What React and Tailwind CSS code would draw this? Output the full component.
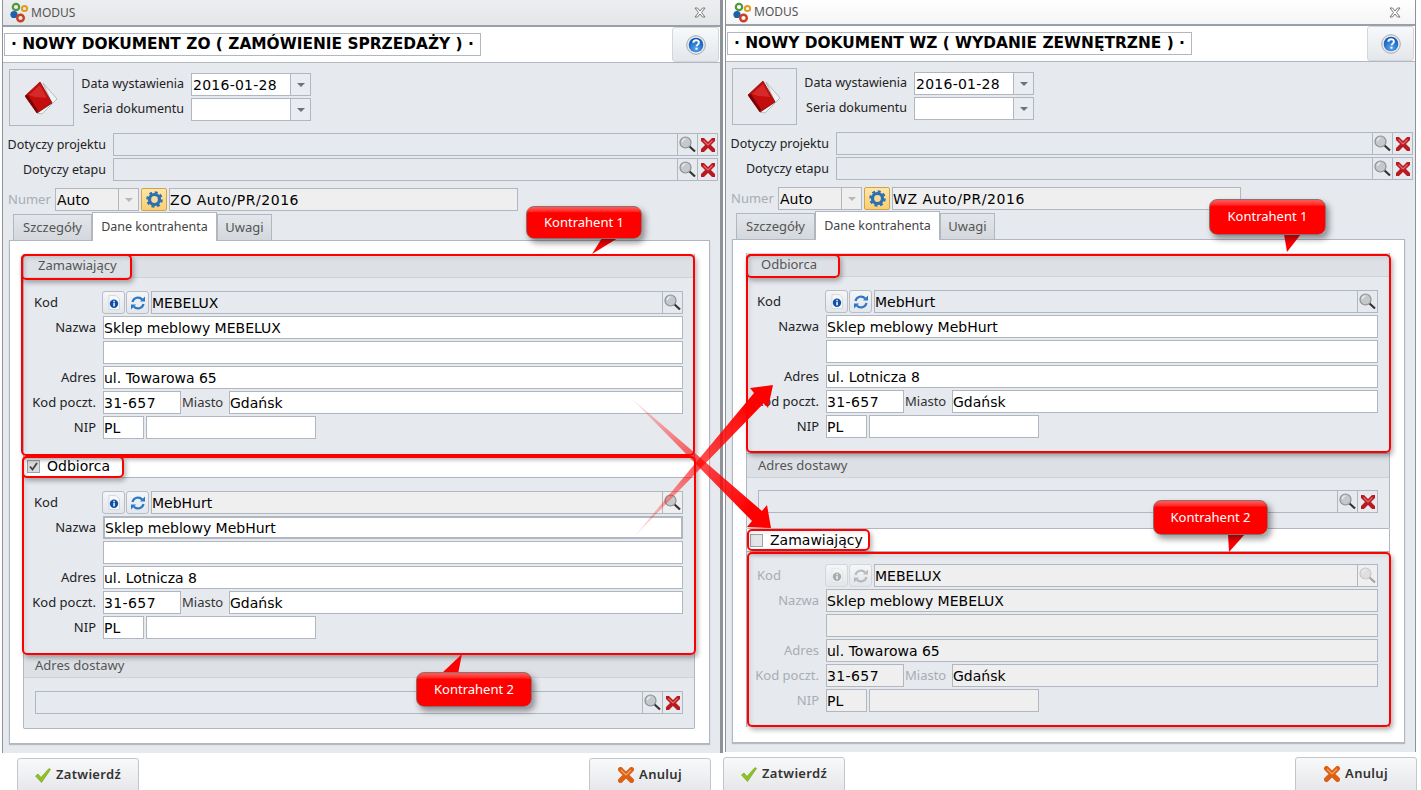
import React from 'react';

const Logo = () => (
  <svg width="19" height="21" viewBox="0 0 19 21" className="shrink-0">
    <circle cx="6" cy="5" r="3.2" fill="none" stroke="#4f9a3c" strokeWidth="2.2" />
    <circle cx="14.5" cy="6.5" r="2.6" fill="none" stroke="#e39a1f" strokeWidth="2" />
    <circle cx="4" cy="12.5" r="3.6" fill="#1f5fb0" />
    <circle cx="10.5" cy="16" r="3.3" fill="none" stroke="#c8401f" strokeWidth="2.4" />
  </svg>
);

const CloseIcon = () => (
  <svg width="12" height="11" viewBox="0 0 12 11">
    <path d="M1 1h2.5L6 4l2.500-3H11L7.500 5.500 11 10H8.500L6 7l-2.500 3H1l3.500-4.500z" fill="#fff" stroke="#777" strokeWidth="1" />
  </svg>
);

const HelpIcon = () => (
  <svg width="20" height="20" viewBox="0 0 20 20">
    <defs>
      <radialGradient id="helpBall" cx="50%" cy="75%" r="70%">
        <stop offset="0" stopColor="#5aa6ee" />
        <stop offset="1" stopColor="#0b55b5" />
      </radialGradient>
    </defs>
    <circle cx="10" cy="10" r="9.300" fill="#e8ecef" stroke="#a3a9ae" />
    <circle cx="10" cy="10" r="7.300" fill="url(#helpBall)" />
    <path d="M7.300 7.800c0-3.400 5.600-3.400 5.600-.2 0 2-2.300 2-2.300 3.700" fill="none" stroke="#fff" strokeWidth="1.900" />
    <rect x="9.500" y="12.700" width="2" height="2" fill="#fff" />
  </svg>
);

const BookIcon = () => (
  <svg width="33" height="34" viewBox="0 0 33 34">
    <polygon points="18,2 32,18 17,33 12,32 27,22" fill="#f1f3f4" stroke="#a9adb0" strokeWidth="0.800" />
    <polygon points="0,15 15,1 27,22 12,32" fill="#c40d0d" stroke="#8c0606" strokeWidth="0.800" />
    <polygon points="4,14 15,4 22,17 10,16" fill="#e23c3c" opacity="0.600" />
    <polygon points="0,15 12,32 13,29.500 3,14" fill="#7a0404" />
  </svg>
);

const SearchIcon = ({ faded }) => (
  <svg width="17" height="17" viewBox="0 0 17 17" className={faded ? 'opacity-40' : ''}>
    <line x1="9.500" y1="9.500" x2="16" y2="15.500" stroke="#333" strokeWidth="2.200" />
    <circle cx="6.500" cy="6.500" r="5.500" fill="#c6c9cb" stroke="#8e9193" strokeWidth="1.200" />
    <path d="M3.500 6a3 3 0 0 1 3-3" fill="none" stroke="#f1f2f3" strokeWidth="1.200" />
  </svg>
);

const RedX = () => (
  <svg width="14" height="14" viewBox="0 0 14 14">
    <path d="M1.500 1.500 12.500 12.500M12.500 1.500 1.500 12.500" stroke="#b81a20" strokeWidth="4.200" strokeLinecap="round" />
    <path d="M2.500 2.500 7 7M11.500 2.500 7 7" stroke="#e8686c" strokeWidth="1.100" />
  </svg>
);

const OrangeX = () => (
  <svg width="16" height="16" viewBox="0 0 16 16">
    <path d="M2.500 2.500 13.500 13.500M13.500 2.500 2.500 13.500" stroke="#dd5f14" strokeWidth="5" strokeLinecap="round" />
    <path d="M3 3 8 8M13 3 8 8" stroke="#f5a467" strokeWidth="1.300" />
  </svg>
);

const CheckIcon = () => (
  <svg width="16" height="15" viewBox="0 0 16 15">
    <path d="M0.500 8 3 6l3 3.500L14 0.500l1.500 1L6.500 14.500z" fill="#8fc31f" stroke="#6f9c1a" strokeWidth="0.600" />
  </svg>
);

const GearIcon = () => (
  <svg width="17" height="17" viewBox="0 0 17 17">
    <circle cx="8.500" cy="8.500" r="5" fill="none" stroke="#2b6fb4" strokeWidth="3.200" />
    <circle cx="8.500" cy="8.500" r="7.200" fill="none" stroke="#2b6fb4" strokeWidth="2.200" strokeDasharray="3 2.650" />
    <circle cx="8.500" cy="8.500" r="2.400" fill="#f7dc9b" />
  </svg>
);

const InfoIcon = ({ faded }) => (
  <svg width="12" height="15" viewBox="0 0 12 15" className={faded ? 'opacity-40 grayscale' : ''}>
    <path d="M1 0.500h7l3.500 3.500v10.500H1z" fill="#f7f8fa" stroke="#c9ced3" strokeWidth="0.700" />
    <circle cx="6" cy="8.800" r="4.200" fill="#0e4fa8" />
    <rect x="5.300" y="5.800" width="1.500" height="1.400" fill="#fff" />
    <rect x="5.300" y="7.900" width="1.500" height="3.500" fill="#fff" />
  </svg>
);

const RefreshIcon = ({ faded }) => (
  <svg width="16" height="16" viewBox="0 0 16 16" className={faded ? 'opacity-40 grayscale' : ''}>
    <path d="M2.500 7a5.600 5.600 0 0 1 9.700-2.500" fill="none" stroke="#2c78c4" strokeWidth="2.200" />
    <path d="M13.500 9a5.600 5.600 0 0 1-9.700 2.500" fill="none" stroke="#2c78c4" strokeWidth="2.200" />
    <path d="M10 6.500h5V1.500z" fill="#2c78c4" />
    <path d="M6 9.500H1v5z" fill="#2c78c4" />
  </svg>
);

const Caret = ({ faded }) => (
  <span className={`w-0 h-0 border-x-[4px] border-x-transparent border-t-[4px] ${faded ? 'border-t-[#b5b9be]' : 'border-t-[#6d7278]'}`} />
);

const Field = ({ children, className = '' }) => (
  <div className={`h-[23px] flex items-center border border-[#b0b7c0] overflow-hidden whitespace-nowrap font-['DejaVu_Sans'] text-[14px] leading-none text-black ${className}`}>
    {children}
  </div>
);

const ComboField = ({ value, faded }) => (
  <Field className="w-[120px] bg-white tracking-[0.25px]">
    <span className="flex-1 pl-[1px]">{value}</span>
    <span className="w-[20px] self-stretch flex items-center justify-center border-l border-[#b0b7c0] bg-[#e9ecf0]">
      <Caret faded={faded} />
    </span>
  </Field>
);

const IconBtn = ({ children }) => (
  <div className="w-[20px] h-[23px] shrink-0 flex items-center justify-center border border-l-0 border-[#b0b7c0]">{children}</div>
);

const LookupRow = ({ label }) => (
  <div className="flex h-[23px] pl-[3px] pr-[2px] mt-[2px] first:mt-0">
    <div className="w-[100px] mr-[7px] text-right text-[12.5px] whitespace-nowrap text-[#222] leading-[23px]">{label}</div>
    <Field className="flex-1" />
    <IconBtn><SearchIcon /></IconBtn>
    <IconBtn><RedX /></IconBtn>
  </div>
);

const Tab = ({ children, active, className = '' }) => (
  <div className={active
    ? `relative z-10 h-[29px] w-[125px] flex items-center justify-center bg-white border border-b-0 border-[#b0b7c0] text-[12.5px] text-[#444] ${className}`
    : `h-[27px] flex items-center justify-center border border-b-0 border-[#b0b7c0] bg-gradient-to-b from-[#e3e6ea] to-[#d3d7dc] text-[#555] ${className}`}>
    {children}
  </div>
);

const FormRow = ({ label, muted, children, left }) => (
  <div className="flex h-[23px] mt-[2px] first:mt-0">
    <div className={`w-[72px] mr-[7px] whitespace-nowrap leading-[23px] ${left ? 'pl-[10px]' : 'text-right'} ${muted ? 'text-[#a9adb2]' : 'text-[#222]'}`}>{label}</div>
    {children}
  </div>
);

// Contractor form shared by both dialogs, disabled variant has grey inputs
const ContractorForm = ({ code, name, street, city, disabled, focused, codeBg = 'bg-[#e6e9ee]' }) => {
  const bg = disabled ? 'bg-[#efefef]' : 'bg-white';
  return (
    <div className="pr-[11px]">
      <FormRow label="Kod" left muted={disabled}>
        <div className="flex -ml-[1px] flex-1">
          <div className={`w-[23px] h-[23px] shrink-0 flex items-center justify-center rounded-[3px] border ${disabled ? 'border-[#d3d6da]' : 'border-[#b8bec5]'} bg-gradient-to-b from-[#f4f6f8] to-[#e3e6ea]`}><InfoIcon faded={disabled} /></div>
          <div className={`w-[23px] h-[23px] ml-[1px] shrink-0 flex items-center justify-center rounded-[3px] border ${disabled ? 'border-[#d3d6da]' : 'border-[#b8bec5]'} bg-gradient-to-b from-[#f4f6f8] to-[#e3e6ea]`}><RefreshIcon faded={disabled} /></div>
          <Field className={`flex-1 ml-[2px] ${codeBg}`}>
            <span className="flex-1">{code}</span>
            <span className="w-[20px] self-stretch flex items-center justify-center border-l border-[#b0b7c0]"><SearchIcon faded={disabled} /></span>
          </Field>
        </div>
      </FormRow>
      <FormRow label="Nazwa" muted={disabled}>
        <Field className={`flex-1 ${bg} ${focused ? 'border-2 border-[#a4abb3]' : ''}`}>{name}</Field>
      </FormRow>
      <FormRow label="" muted={disabled}>
        <Field className={`flex-1 ${bg}`} />
      </FormRow>
      <FormRow label="Adres" muted={disabled}>
        <Field className={`flex-1 ${bg}`}>{street}</Field>
      </FormRow>
      <FormRow label="Kod poczt." muted={disabled}>
        <Field className={`w-[78px] tracking-[0.4px] ${bg}`}>31-657</Field>
        <div className={`w-[48px] pl-[1px] leading-[23px] ${disabled ? 'text-[#a9adb2]' : 'text-[#333]'}`}>Miasto</div>
        <Field className={`flex-1 ${bg}`}>{city}</Field>
      </FormRow>
      <FormRow label="NIP" muted={disabled}>
        <Field className={`w-[41px] ${bg}`}>PL</Field>
        <Field className={`w-[170px] ml-[2px] ${bg}`} />
      </FormRow>
    </div>
  );
};

const SectionHead = ({ title, className = 'pl-[14px]' }) => (
  <div className={`h-[24px] flex items-center pt-[1px] bg-[#dde0e5] border-b border-[#cfd3d8] text-[#555] ${className}`}>{title}</div>
);

const CheckHead = ({ title, checked }) => (
  <div className="h-[23px] flex items-center pl-[3px] bg-white border-b border-[#b0b7c0]">
    <span className={`w-[13px] h-[13px] flex items-center justify-center border border-[#9ea4aa] ${checked ? 'bg-[#d9dbde]' : 'bg-[#e4e6e9]'}`}>
      {checked && (
        <svg width="9" height="9" viewBox="0 0 9 9">
          <path d="M1 4.500 3.500 7.500 8 1" fill="none" stroke="#444" strokeWidth="1.800" />
        </svg>
      )}
    </span>
    <span className="ml-[7px] font-['DejaVu_Sans'] text-[14px] text-black">{title}</span>
  </div>
);

const DeliveryBox = ({ padClass }) => (
  <div className="bg-[#e6e9ee] border border-t-0 border-[#b0b7c0] rounded-b-[2px]">
    <SectionHead title="Adres dostawy" className="pl-[11px]" />
    <div className={`h-[50px] pl-[11px] pr-[11px] ${padClass}`}>
      <div className="flex">
        <Field className="flex-1" />
        <IconBtn><SearchIcon /></IconBtn>
        <IconBtn><RedX /></IconBtn>
      </div>
    </div>
  </div>
);

const DocDialog = ({ title, barClass, heightClass, children }) => (
  <div className={`flex flex-col bg-[#e6e9ee] border-x border-[#8d9399] ${heightClass}`}>
    <div className={`flex items-center justify-between border-b-2 border-[#9aa0a8] bg-gradient-to-b ${barClass}`}>
      <div className="flex items-center pl-[7px]">
        <Logo />
        <span className="ml-[2px] text-[12px] text-[#555]">MODUS</span>
      </div>
      <div className="mr-[14px]"><CloseIcon /></div>
    </div>
    <div className="flex items-center justify-between h-[36px] bg-white border-b border-[#b0b7c0]">
      <div className="ml-[1px] h-[23px] flex items-center px-[6px] border border-[#b0b7c0] font-['DejaVu_Sans'] font-bold text-[15.4px] text-black whitespace-nowrap">{title}</div>
      <div className="mr-[1px] w-[47px] self-stretch flex items-center justify-center rounded-[3px] border border-[#d3d7db] bg-gradient-to-b from-[#f7f9fb] to-[#e3e7eb]"><HelpIcon /></div>
    </div>
    <div className="flex pl-[6px] pt-[6px]">
      <div className="w-[65px] h-[57px] flex items-center justify-center border border-[#b0b7c0]"><BookIcon /></div>
      <div className="mt-[4px] flex flex-col gap-[2px]">
        <div className="flex items-center">
          <div className="w-[110px] mr-[7px] text-right text-[12.5px] text-[#222]">Data wystawienia</div>
          <ComboField value="2016-01-28" />
        </div>
        <div className="flex items-center">
          <div className="w-[110px] mr-[7px] text-right text-[12.5px] text-[#222]">Seria dokumentu</div>
          <ComboField value="" />
        </div>
      </div>
    </div>
    <div className="mt-[7px]">
      <LookupRow label="Dotyczy projektu" />
      <LookupRow label="Dotyczy etapu" />
    </div>
    <div className="flex items-center h-[23px] mt-[7px] pl-[5px]">
      <div className="w-[47px] text-[#a9adb2]">Numer</div>
      <Field className="w-[84px] bg-[#efefef]">
        <span className="flex-1 pl-[1px]">Auto</span>
        <span className="w-[20px] self-stretch flex items-center justify-center border-l border-[#b0b7c0]"><Caret faded /></span>
      </Field>
      <div className="w-[26px] h-[23px] ml-[2px] flex items-center justify-center rounded-[2px] border border-[#d2a24a] bg-gradient-to-b from-[#fde6a8] to-[#f9cf72]"><GearIcon /></div>
      <Field className="w-[349px] ml-[2px] bg-[#efefef] tracking-[0.55px]">{`${title.includes('ZO') ? 'ZO' : 'WZ'} Auto/PR/2016`}</Field>
    </div>
    <div className="flex items-end h-[29px] mt-[1px] pl-[10px]">
      <Tab className="w-[79px]">Szczegóły</Tab>
      <Tab active>Dane kontrahenta</Tab>
      <Tab className="w-[55px]">Uwagi</Tab>
    </div>
    <div className="ml-[6px] mr-[10px] -mt-[1px] h-[504px] pt-[13px] pl-[13px] pr-[14px] bg-white border border-[#b0b7c0] shadow-[0_1px_1px_rgba(0,0,0,0.2)]">
      {children}
    </div>
  </div>
);

const FooterButton = ({ icon, label }) => (
  <div className="w-[122px] h-[34px] flex items-center justify-center gap-[5px] border border-[#c3c7cb] rounded-t-[3px] bg-gradient-to-b from-[#f8f9fa] to-[#e5e7ea]">
    {icon}
    <span className="font-semibold text-[13px] tracking-[0.3px] text-[#333]">{label}</span>
  </div>
);

// annotations laid over the screenshot
const RedFrame = ({ className }) => (
  <div className={`absolute border-2 border-[#f00] rounded-[5px] shadow-[2px_3px_5px_rgba(0,0,0,0.3),inset_2px_2px_4px_rgba(0,0,0,0.08)] pointer-events-none ${className}`} />
);

const Callout = ({ label, className, tail }) => (
  <div className={`absolute ${className}`}>
    <svg className="absolute left-0 top-0 overflow-visible" width="1" height="1">
      <polygon points={tail} fill="#f00" />
    </svg>
    <div className="relative h-full flex items-center justify-center rounded-[8px] border border-[#8c7070] bg-gradient-to-b from-[#ff5a5a] via-[#f00] via-[18%] to-[#f00] shadow-[3px_4px_6px_rgba(0,0,0,0.4)] text-white text-[13px]">
      {label}
    </div>
  </div>
);

const CrossArrows = () => (
  <svg className="absolute left-0 top-0 pointer-events-none" width="1421" height="790">
    <defs>
      <linearGradient id="arrowUp" gradientUnits="userSpaceOnUse" x1="633" y1="538" x2="773" y2="385">
        <stop offset="0" stopColor="#f00" stopOpacity="0.05" />
        <stop offset="0.5" stopColor="#f00" stopOpacity="0.7" />
        <stop offset="0.85" stopColor="#f00" />
      </linearGradient>
      <linearGradient id="arrowDown" gradientUnits="userSpaceOnUse" x1="630" y1="397" x2="771" y2="528">
        <stop offset="0" stopColor="#f00" stopOpacity="0.05" />
        <stop offset="0.5" stopColor="#f00" stopOpacity="0.7" />
        <stop offset="0.85" stopColor="#f00" />
      </linearGradient>
    </defs>
    <polygon points="633,538 754,393 750,388 773,385 768,408 764,403" fill="url(#arrowUp)" />
    <polygon points="630,397 762,511 767,505 771,528 747,527 752,521" fill="url(#arrowDown)" />
  </svg>
);

export default function App() {
  return (
    <div className="relative w-[1421px] h-[790px] overflow-hidden bg-white flex font-['Noto_Sans'] text-[13px]">
      <div className="w-[723px] shrink-0 pl-[2px]">
        <div className="w-[719px] shadow-[2px_0_0_#8d9399]">
          <DocDialog
            title="· NOWY DOKUMENT ZO ( ZAMÓWIENIE SPRZEDAŻY ) ·"
            barClass="h-[27px] from-[#eceef0] to-[#e4e6e9]"
            heightClass="h-[753px]"
          >
            <div className="bg-[#e6e9ee] border border-t-0 border-[#b0b7c0]">
              <SectionHead title="Zamawiający" />
              <div className="pt-[13px] pb-[15px]">
                <ContractorForm code="MEBELUX" name="Sklep meblowy MEBELUX" street="ul. Towarowa 65" city="Gdańsk" />
              </div>
            </div>
            <div className="bg-[#e6e9ee] border-x border-[#b0b7c0]">
              <CheckHead title="Odbiorca" checked />
              <div className="pt-[13px] pb-[15px]">
                <ContractorForm code="MebHurt" name="Sklep meblowy MebHurt" street="ul. Lotnicza 8" city="Gdańsk" focused codeBg="bg-[#efefef]" />
              </div>
            </div>
            <DeliveryBox padClass="pt-[13px]" />
          </DocDialog>
        </div>
        <div className="flex justify-between pt-[5px] pl-[15px] pr-[12px]">
          <FooterButton icon={<CheckIcon />} label="Zatwierdź" />
          <FooterButton icon={<OrangeX />} label="Anuluj" />
        </div>
      </div>

      <div className="w-[698px] shrink-0">
        <div className="ml-[2px] w-[691px]">
          <DocDialog
            title="· NOWY DOKUMENT WZ ( WYDANIE ZEWNĘTRZNE ) ·"
            barClass="h-[26px] from-[#ffffff] to-[#f5f5f5]"
            heightClass="h-[752px]"
          >
            <div className="bg-[#e6e9ee] border border-t-0 border-[#b0b7c0]">
              <SectionHead title="Odbiorca" />
              <div className="pt-[13px] pb-[15px]">
                <ContractorForm code="MebHurt" name="Sklep meblowy MebHurt" street="ul. Lotnicza 8" city="Gdańsk" />
              </div>
            </div>
            <DeliveryBox padClass="pt-[12px]" />
            <div className="bg-[#e6e9ee] border-x border-[#b0b7c0]">
              <CheckHead title="Zamawiający" />
              <div className="pt-[12px] pb-[15px]">
                <ContractorForm code="MEBELUX" name="Sklep meblowy MEBELUX" street="ul. Towarowa 65" city="Gdańsk" disabled codeBg="bg-[#efefef]" />
              </div>
            </div>
          </DocDialog>
        </div>
        <div className="flex justify-between pt-[5px] pr-[4px]">
          <FooterButton icon={<CheckIcon />} label="Zatwierdź" />
          <FooterButton icon={<OrangeX />} label="Anuluj" />
        </div>
      </div>

      <RedFrame className="left-[21px] top-[254px] w-[674px] h-[202px]" />
      <RedFrame className="left-[21px] top-[254px] w-[111px] h-[26px]" />
      <RedFrame className="left-[22px] top-[456px] w-[102px] h-[22px]" />
      <RedFrame className="left-[22px] top-[456px] w-[674px] h-[199px]" />
      <RedFrame className="left-[746px] top-[254px] w-[645px] h-[199px]" />
      <RedFrame className="left-[746px] top-[254px] w-[94px] h-[24px]" />
      <RedFrame className="left-[747px] top-[529px] w-[123px] h-[22px]" />
      <RedFrame className="left-[747px] top-[552px] w-[644px] h-[175px]" />

      <CrossArrows />

      <Callout label="Kontrahent 1" className="left-[526px] top-[206px] w-[116px] h-[33px]" tail="76,32 92,32 66,48" />
      <Callout label="Kontrahent 2" className="left-[416px] top-[672px] w-[116px] h-[35px]" tail="25,2 42,2 46,-18" />
      <Callout label="Kontrahent 1" className="left-[1209px] top-[199px] w-[117px] h-[36px]" tail="75,35 92,35 78,53" />
      <Callout label="Kontrahent 2" className="left-[1153px] top-[500px] w-[115px] h-[35px]" tail="75,34 92,34 76,52" />
    </div>
  );
}
